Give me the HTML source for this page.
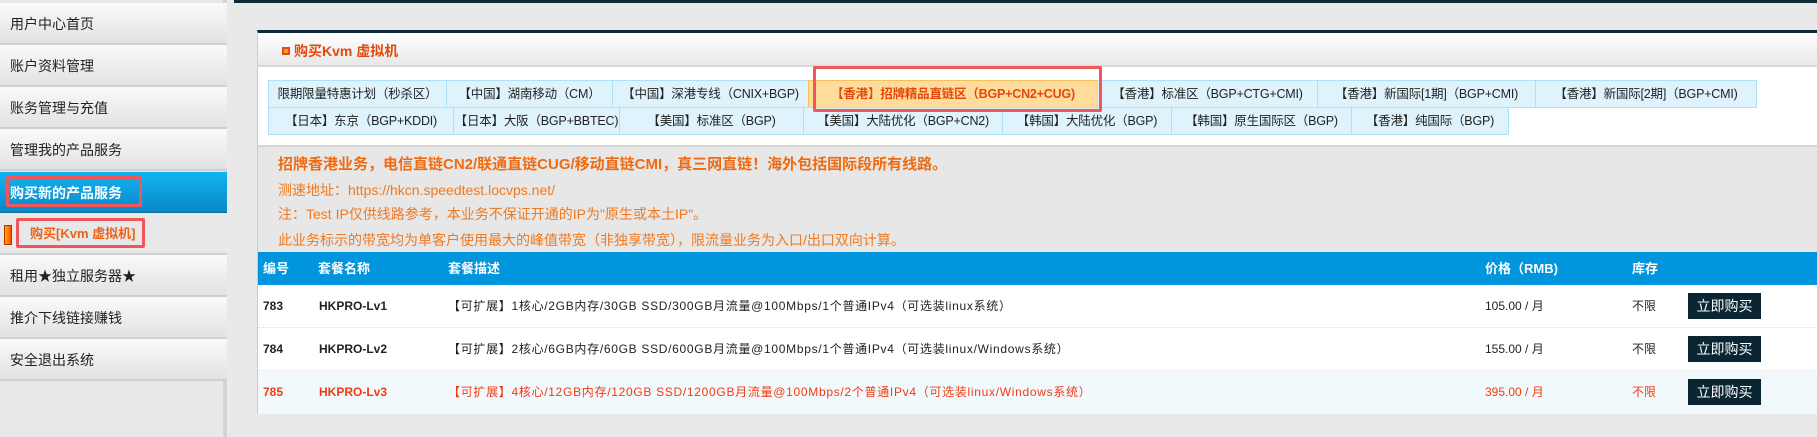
<!DOCTYPE html>
<html><head><meta charset="utf-8"><style>
*{margin:0;padding:0;box-sizing:border-box}
body{width:1817px;height:437px;overflow:hidden;background:#e9e9e9;font-family:"Liberation Sans","Noto Sans CJK SC",sans-serif;position:relative;font-size:13px;color:#222}
.side{position:absolute;left:0;top:0;width:227px;height:437px;background:#e8e8e8;border-right:4px solid #d4d4d4}
.it{position:absolute;left:0;width:227px;height:42px;background:linear-gradient(#fafafa,#e2e2e2);border-bottom:2px solid #d0d0d0;font-size:14px;line-height:42px;padding-left:10px;color:#222}
.topbar{position:absolute;left:234px;top:0;right:0;height:3px;background:#0e2c38}
.panel{position:absolute;left:257px;top:30px;width:1560px;height:384px;background:#fff;border-top:3px solid #0e2c38;border-bottom:1px solid #ccc;border-left:1px solid #ccc}
.ab{position:absolute;white-space:nowrap}
.tab{position:absolute;height:28px;line-height:27px;text-align:center;background:#dff3fc;border:1px solid #aee0f7;font-size:12.5px;color:#222;white-space:nowrap;overflow:hidden;letter-spacing:-0.2px}
.box{position:absolute;border:3px solid #f0575a;border-radius:2px}
.btn{position:absolute;left:1430px;width:73px;height:26px;background:#0a2633;color:#fff;font-size:14px;line-height:26px;text-align:center}
.row{font-size:12px}
.row .d{font-size:12px;letter-spacing:0.7px}
</style></head><body>
<div class="side">
<div class="it" style="top:3px">用户中心首页</div>
<div class="it" style="top:45px">账户资料管理</div>
<div class="it" style="top:87px">账务管理与充值</div>
<div class="it" style="top:129px">管理我的产品服务</div>
<div class="it" style="top:172px;background:linear-gradient(#10b4f2,#0a88c8);color:#fff;font-weight:bold;border-bottom:2px solid #0a6ea0">购买新的产品服务</div>
<div class="it" style="top:213px;background:#e8e8e8;color:#f06010;font-weight:bold;font-size:13px;padding-left:30px">购买[Kvm 虚拟机]</div>
<div class="ab" style="left:4px;top:225px;width:8px;height:20px;background:linear-gradient(90deg,#ffb000,#ff4a00);border:1px solid #c03000"></div>
<div class="it" style="top:255px">租用★独立服务器★</div>
<div class="it" style="top:297px">推介下线链接赚钱</div>
<div class="it" style="top:339px">安全退出系统</div>
</div>
<div class="box" style="left:6px;top:176px;width:136px;height:31px"></div>
<div class="box" style="left:16px;top:218px;width:129px;height:30px"></div>
<div class="topbar"></div>
<div class="panel">
<div class="ab" style="left:0;top:0;width:1560px;height:34px;background:linear-gradient(#fff,#e8e8e8);border-bottom:2px solid #d8d8d8"></div>
<div class="ab" style="left:24px;top:14px;width:8px;height:8px;border:2px solid #e94a0c;background:#f7a030"></div>
<div class="ab" style="left:36px;top:8px;font-size:14px;font-weight:bold;color:#e4480a">购买Kvm 虚拟机</div>
<div class="tab" style="left:10px;top:47px;width:179px">限期限量特惠计划（秒杀区）</div>
<div class="tab" style="left:188px;top:47px;width:167px">【中国】湖南移动（CM）</div>
<div class="tab" style="left:354px;top:47px;width:197px">【中国】深港专线（CNIX+BGP)</div>
<div class="tab" style="left:550px;top:47px;width:290px;background:#ffdc9c;border-color:#f5c060;color:#e4480a;font-weight:bold">【香港】招牌精品直链区（BGP+CN2+CUG)</div>
<div class="tab" style="left:839px;top:47px;width:221px">【香港】标准区（BGP+CTG+CMI)</div>
<div class="tab" style="left:1059px;top:47px;width:219px">【香港】新国际[1期]（BGP+CMI)</div>
<div class="tab" style="left:1277px;top:47px;width:222px">【香港】新国际[2期]（BGP+CMI)</div>
<div class="tab" style="left:10px;top:74px;width:186px">【日本】东京（BGP+KDDI)</div>
<div class="tab" style="left:195px;top:74px;width:167px">【日本】大阪（BGP+BBTEC)</div>
<div class="tab" style="left:361px;top:74px;width:185px">【美国】标准区（BGP)</div>
<div class="tab" style="left:545px;top:74px;width:200px">【美国】大陆优化（BGP+CN2)</div>
<div class="tab" style="left:744px;top:74px;width:170px">【韩国】大陆优化（BGP)</div>
<div class="tab" style="left:913px;top:74px;width:181px">【韩国】原生国际区（BGP)</div>
<div class="tab" style="left:1093px;top:74px;width:158px">【香港】纯国际（BGP)</div>
<div class="ab" style="left:0;top:112px;width:1560px;height:108px;background:#e7e7e7;border-top:2px solid #d4d4d4"></div>
<div class="ab" style="left:20px;top:120px;font-size:15px;font-weight:bold;color:#f06a10">招牌香港业务，电信直链CN2/联通直链CUG/移动直链CMI，真三网直链！海外包括国际段所有线路。</div>
<div class="ab" style="left:20px;top:147px;font-size:14px;color:#f07a20">测速地址：https://hkcn.speedtest.locvps.net/</div>
<div class="ab" style="left:20px;top:171px;font-size:14px;color:#f07a20">注：Test IP仅供线路参考，本业务不保证开通的IP为"原生或本土IP"。</div>
<div class="ab" style="left:20px;top:197px;font-size:14px;color:#f07a20">此业务标示的带宽均为单客户使用最大的峰值带宽（非独享带宽），限流量业务为入口/出口双向计算。</div>
<div class="ab" style="left:0;top:219px;width:1560px;height:33px;background:#0095dd;color:#fff;font-weight:bold;font-size:13px;line-height:33px">
<span class="ab" style="left:5px">编号</span><span class="ab" style="left:60px">套餐名称</span><span class="ab" style="left:190px">套餐描述</span><span class="ab" style="left:1227px">价格（RMB)</span><span class="ab" style="left:1374px">库存</span></div>
<div class="ab row" style="left:0;top:252px;width:1560px;height:43px;border-bottom:1px dotted #ddd;line-height:43px">
<span class="ab" style="left:5px;font-weight:bold">783</span><span class="ab" style="left:61px;font-weight:bold">HKPRO-Lv1</span><span class="ab d" style="left:190px">【可扩展】1核心/2GB内存/30GB SSD/300GB月流量@100Mbps/1个普通IPv4（可选装linux系统）</span><span class="ab" style="left:1227px">105.00 / 月</span><span class="ab" style="left:1374px">不限</span></div>
<div class="btn" style="top:260px">立即购买</div>
<div class="ab row" style="left:0;top:295px;width:1560px;height:43px;border-bottom:1px dotted #ddd;line-height:43px">
<span class="ab" style="left:5px;font-weight:bold">784</span><span class="ab" style="left:61px;font-weight:bold">HKPRO-Lv2</span><span class="ab d" style="left:190px">【可扩展】2核心/6GB内存/60GB SSD/600GB月流量@100Mbps/1个普通IPv4（可选装linux/Windows系统）</span><span class="ab" style="left:1227px">155.00 / 月</span><span class="ab" style="left:1374px">不限</span></div>
<div class="btn" style="top:303px">立即购买</div>
<div class="ab row" style="left:0;top:338px;width:1560px;height:43px;background:#f2f9fd;line-height:43px;color:#f03c10">
<span class="ab" style="left:5px;font-weight:bold">785</span><span class="ab" style="left:61px;font-weight:bold">HKPRO-Lv3</span><span class="ab d" style="left:190px">【可扩展】4核心/12GB内存/120GB SSD/1200GB月流量@100Mbps/2个普通IPv4（可选装linux/Windows系统）</span><span class="ab" style="left:1227px">395.00 / 月</span><span class="ab" style="left:1374px">不限</span></div>
<div class="btn" style="top:346px">立即购买</div>
</div>
<div class="box" style="left:813px;top:66px;width:289px;height:46px"></div>
</body></html>
